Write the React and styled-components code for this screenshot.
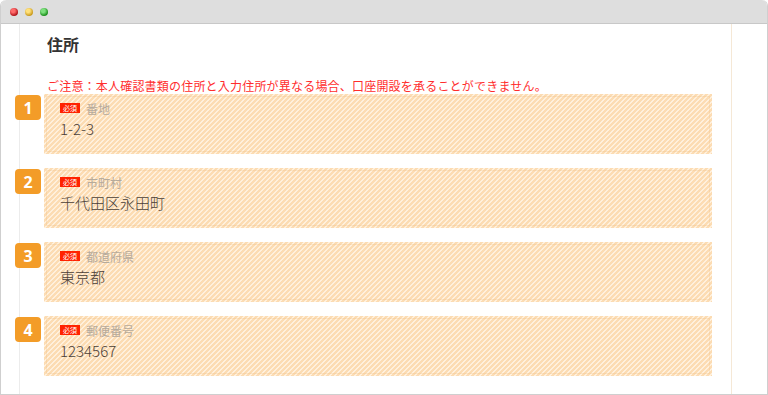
import React from "react";
import styled, { createGlobalStyle } from "styled-components";

const Global = createGlobalStyle`
  html, body { margin: 0; padding: 0; background: #fff; }
  body { font-family: "Noto Sans CJK JP", "Noto Sans", sans-serif; }
`;

const Window = styled.div`
  width: 768px;
  height: 395px;
  box-sizing: border-box;
  border: 1px solid #cfcfcf;
  border-top: none;
  border-radius: 6px 6px 0 0;
  display: flex;
  flex-direction: column;
  overflow: hidden;
`;

const TitleBar = styled.div`
  height: 23px;
  flex: none;
  background: #dedede;
  border-bottom: 1px solid #c8c8c8;
  border-radius: 6px 6px 0 0;
  display: flex;
  align-items: center;
  gap: 7px;
  padding-left: 10px;
  margin: 0 -1px;
`;

const Light = styled.span`
  width: 8px;
  height: 8px;
  border-radius: 50%;
  background: radial-gradient(circle at 40% 35%, ${(p) => p.$hi} 0 25%, ${(p) => p.$c} 70%);
`;

const Body = styled.div`
  flex: 1;
  display: flex;
`;

const Panel = styled.div`
  margin-left: 18px;
  width: 713px;
  box-sizing: border-box;
  border-left: 1px solid #ececec;
  border-right: 1px solid #f5e8d6;
  padding: 10px 0 0 27px;
`;

const Title = styled.h2`
  margin: 0;
  font-size: 16px;
  line-height: 21px;
  font-weight: bold;
  color: #333;
`;

const Notice = styled.p`
  margin: 23px 0 0;
  font-size: 12px;
  letter-spacing: 0.2px;
  line-height: 16px;
  color: #ff2d2d;
  white-space: nowrap;
`;

const List = styled.div`
  margin: 0 0 0 -32px;
  display: flex;
  flex-direction: column;
  gap: 14px;
`;

const Row = styled.div`
  display: flex;
  align-items: flex-start;
  gap: 3px;
`;

const Num = styled.div`
  width: 26px;
  height: 25px;
  margin-top: 1px;
  border-radius: 4px;
  background: #f39c28;
  color: #fff;
  font-family: "Open Sans", "Noto Sans", sans-serif;
  font-weight: bold;
  font-size: 16px;
  display: flex;
  align-items: center;
  justify-content: center;
`;

const Field = styled.div`
  width: 668px;
  height: 60px;
  box-sizing: border-box;
  padding: 7px 0 0 16px;
  background-color: #fcdcb3;
  background-image: linear-gradient(
    135deg,
    #fff0dc 0%,
    #fff0dc 14%,
    transparent 14%,
    transparent 50%,
    #fff0dc 50%,
    #fff0dc 64%,
    transparent 64%,
    transparent 100%
  );
  background-size: 5px 5px;
  outline: 1px solid rgba(236, 190, 130, 0.28);
  outline-offset: -3px;
`;

const LabelLine = styled.div`
  display: flex;
  align-items: center;
  gap: 6px;
  height: 14px;
`;

const Required = styled.span`
  background: #ff2200;
  color: #fff;
  font-size: 7px;
  line-height: 10px;
  padding: 0 3px;
  height: 10px;
  display: inline-flex;
  align-items: center;
`;

const Label = styled.span`
  font-size: 12px;
  color: #b5aa9c;
`;

const Value = styled.div`
  margin-top: 4px;
  font-size: 15px;
  line-height: 19px;
  font-weight: 300;
  color: #4a4038;
`;

const fields = [
  { n: 1, label: "番地", value: "1-2-3" },
  { n: 2, label: "市町村", value: "千代田区永田町" },
  { n: 3, label: "都道府県", value: "東京都" },
  { n: 4, label: "郵便番号", value: "1234567" },
];

export default function App() {
  return (
    <>
      <Global />
      <Window>
        <TitleBar>
          <Light $c="#b0141a" $hi="#ff6a6a" />
          <Light $c="#c99a1c" $hi="#ffe07a" />
          <Light $c="#1c8f1c" $hi="#7de07d" />
        </TitleBar>
        <Body>
          <Panel>
            <Title>住所</Title>
            <Notice>
              ご注意：本人確認書類の住所と入力住所が異なる場合、口座開設を承ることができません。
            </Notice>
            <List>
              {fields.map((f) => (
                <Row key={f.n}>
                  <Num>{f.n}</Num>
                  <Field>
                    <LabelLine>
                      <Required>必須</Required>
                      <Label>{f.label}</Label>
                    </LabelLine>
                    <Value>{f.value}</Value>
                  </Field>
                </Row>
              ))}
            </List>
          </Panel>
        </Body>
      </Window>
    </>
  );
}
